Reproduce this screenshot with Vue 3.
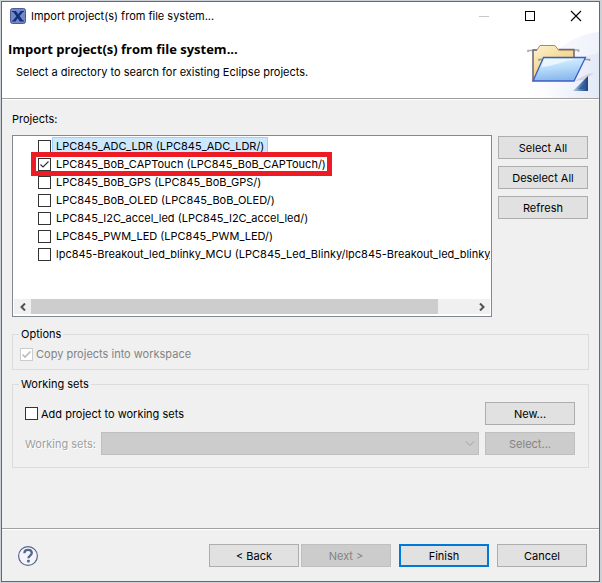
<script setup>
import { ref } from 'vue'

const projects = ref([
  { id: 'adc', label: 'LPC845_ADC_LDR (LPC845_ADC_LDR/)', checked: false, selected: true },
  { id: 'cap', label: 'LPC845_BoB_CAPTouch (LPC845_BoB_CAPTouch/)', checked: true, marked: true },
  { id: 'gps', label: 'LPC845_BoB_GPS (LPC845_BoB_GPS/)', checked: false },
  { id: 'oled', label: 'LPC845_BoB_OLED (LPC845_BoB_OLED/)', checked: false },
  { id: 'i2c', label: 'LPC845_I2C_accel_led (LPC845_I2C_accel_led/)', checked: false },
  { id: 'pwm', label: 'LPC845_PWM_LED (LPC845_PWM_LED/)', checked: false },
  { id: 'blinky', label: 'lpc845-Breakout_led_blinky_MCU (LPC845_Led_Blinky/lpc845-Breakout_led_blinky_', checked: false },
])
const copyProjects = ref(true)
const addToSets = ref(false)

function setAll(value) {
  projects.value.forEach((p) => { p.checked = value })
}
</script>

<template>
  <main class="dialog">
    <div class="titlebar">
      <svg class="app-icon" width="16" height="16" viewBox="0 0 16 16" aria-hidden="true">
        <rect x="0.5" y="0.5" width="15" height="15" rx="2" fill="#7687c3" stroke="#4a5d9c" />
        <path d="M2 3H6L8.2 6.2L10.6 3H14V4H13L9.6 8L13 12.4H14V13.4H9.8L7.8 10.2L5.4 13.4H2V12.4H3L6.4 8.2L3.2 4H2Z" fill="#10307f" />
      </svg>
      <span class="title">Import project(s) from file system...</span>
      <div class="window-buttons">
        <button class="win-btn" type="button" aria-label="Minimize">
          <svg width="12" height="12" viewBox="0 0 12 12"><path d="M1 6.5H11" stroke="#c8c8c8" /></svg>
        </button>
        <button class="win-btn" type="button" aria-label="Maximize">
          <svg width="12" height="12" viewBox="0 0 12 12"><rect x="1.5" y="1.5" width="9" height="9" fill="none" stroke="#000" /></svg>
        </button>
        <button class="win-btn" type="button" aria-label="Close">
          <svg width="12" height="12" viewBox="0 0 12 12"><path d="M1 1L11 11M11 1L1 11" stroke="#000" stroke-width="1.1" /></svg>
        </button>
      </div>
    </div>

    <header class="banner">
      <div class="banner-text">
        <h1>Import project(s) from file system...</h1>
        <p>Select a directory to search for existing Eclipse projects.</p>
      </div>
      <svg class="banner-art" width="75" height="66" viewBox="0 0 75 66" aria-hidden="true">
        <defs>
          <linearGradient id="swoosh" x1="0" y1="0" x2="1" y2="0">
            <stop offset="0" stop-color="#fff" />
            <stop offset="1" stop-color="#dfe5f7" />
          </linearGradient>
          <linearGradient id="back" x1="0" y1="0" x2="0.6" y2="1">
            <stop offset="0" stop-color="#fdf3d2" />
            <stop offset="1" stop-color="#f0c460" />
          </linearGradient>
          <linearGradient id="front" x1="0" y1="0" x2="0.2" y2="1">
            <stop offset="0" stop-color="#e4f4ff" />
            <stop offset="0.5" stop-color="#b8dcfa" />
            <stop offset="1" stop-color="#8ab9ee" />
          </linearGradient>
          <linearGradient id="corner" x1="0" y1="0" x2="1" y2="0">
            <stop offset="0" stop-color="#b9cfe6" />
            <stop offset="0.5" stop-color="#5584b8" />
            <stop offset="1" stop-color="#1d427e" />
          </linearGradient>
        </defs>
        <path d="M0 66C16 24 48 2 75 0V66Z" fill="url(#swoosh)" opacity="0.5" />
        <path d="M14 66C26 38 52 24 75 21V66Z" fill="url(#swoosh)" opacity="0.7" />
        <path d="M50 49L64 42L70 41L60 48Z" fill="#c8c0d4" opacity="0.6" />
        <path d="M4 20V18.5H9M50 18H54.5V20" fill="none" stroke="#aaa" stroke-width="1.6" />
        <path d="M9 49V18H13L16 13.5H31L34.5 18H50V46H12Z" fill="url(#back)" stroke="#b08b48" />
        <path d="M9 49V18H13M34.5 17.5H50V26" fill="none" stroke="#6b6690" stroke-width="1.3" />
        <path d="M15 29V27.5H20M61 27.5H65.5V29" fill="none" stroke="#999" stroke-width="1.5" />
        <path d="M9 49L19.5 25.5H61.5L50 49Z" fill="url(#front)" stroke="#3c5cc4" stroke-width="1.3" />
        <path d="M17 35L20.5 27H56C40 28 32 34 17 35Z" fill="#f0faff" opacity="0.8" />
        <path d="M49 59L64 44V59Z" fill="url(#corner)" />
        <path d="M54 57L61 51V57Z" fill="#2e5792" opacity="0.7" />
      </svg>
    </header>

    <div class="content">
      <h2 id="projects-label" class="section-label">Projects:</h2>
      <div class="projects">
        <div class="list-box">
          <ul class="rows" aria-labelledby="projects-label">
            <li v-for="p in projects" :key="p.id" class="row">
              <span class="tick">
                <input :id="p.id" v-model="p.checked" type="checkbox" />
                <svg v-if="p.checked" width="13" height="13" viewBox="0 0 13 13"><path d="M2.5 6.5L5 9L10.5 3.5" /></svg>
              </span>
              <label :for="p.id" class="row-label" :class="{ selected: p.selected }">{{ p.label }}</label>
              <span v-if="p.marked" class="marker"></span>
            </li>
          </ul>
          <div class="scrollbar">
            <button class="scroll-btn" type="button" aria-label="Scroll left">
              <svg width="8" height="8" viewBox="0 0 8 8"><path d="M6 0.5L2.5 4L6 7.5" /></svg>
            </button>
            <div class="track"><div class="thumb"></div></div>
            <button class="scroll-btn" type="button" aria-label="Scroll right">
              <svg width="8" height="8" viewBox="0 0 8 8"><path d="M2 0.5L5.5 4L2 7.5" /></svg>
            </button>
          </div>
        </div>
        <div class="side">
          <button class="btn" type="button" @click="setAll(true)">Select All</button>
          <button class="btn" type="button" @click="setAll(false)">Deselect All</button>
          <button class="btn" type="button">Refresh</button>
        </div>
      </div>

      <fieldset class="group options">
        <legend>Options</legend>
        <div class="check-line muted">
          <span class="tick">
            <input id="copy" v-model="copyProjects" type="checkbox" disabled />
            <svg v-if="copyProjects" width="13" height="13" viewBox="0 0 13 13"><path d="M2.5 6.5L5 9L10.5 3.5" /></svg>
          </span>
          <label for="copy">Copy projects into workspace</label>
        </div>
      </fieldset>

      <fieldset class="group sets">
        <legend>Working sets</legend>
        <div class="set-line">
          <div class="check-line">
            <span class="tick"><input id="add" v-model="addToSets" type="checkbox" /></span>
            <label for="add">Add project to working sets</label>
          </div>
          <button class="btn" type="button">New...</button>
        </div>
        <div class="set-line">
          <label for="sets" class="set-label">Working sets:</label>
          <div class="combo">
            <select id="sets" disabled></select>
            <svg width="10" height="6" viewBox="0 0 10 6"><path d="M1 0.5L5 4.5L9 0.5" /></svg>
          </div>
          <button class="btn" type="button" disabled>Select...</button>
        </div>
      </fieldset>
    </div>

    <footer class="footer">
      <button class="help" type="button" aria-label="Help">
        <svg width="22" height="22" viewBox="0 0 22 22">
          <circle cx="11" cy="11" r="9.4" fill="#f4f5f9" stroke="#56678f" stroke-width="1.2" />
          <path d="M7.4 8.2C7.4 5.8 9 4.9 11.1 4.9C13.3 4.9 14.8 6.1 14.8 8C14.8 10.6 11.4 10.6 11.4 13.2" fill="none" stroke="#56678f" stroke-width="2.3" />
          <rect x="10" y="14.8" width="2.8" height="2.6" rx="1" fill="#56678f" />
        </svg>
      </button>
      <div class="nav">
        <button class="btn" type="button">&lt; Back</button>
        <button class="btn" type="button" disabled>Next &gt;</button>
      </div>
      <button class="btn primary" type="button">Finish</button>
      <button class="btn" type="button">Cancel</button>
    </footer>
  </main>
</template>

<style>
body {
  margin: 0;
  background: #cdd1d8;
}
#app {
  display: flex;
  min-height: 100vh;
}
</style>

<style scoped>
* {
  box-sizing: border-box;
}
.dialog {
  flex: 1;
  min-width: 0;
  display: flex;
  flex-direction: column;
  margin: 1px 2px 1px 1px;
  border: 1px solid #1e7bc8;
  background: #f0f0f0;
  color: #000;
  font: 11px/16px Inter, "Open Sans", sans-serif;
}
button,
select {
  font: inherit;
  color: inherit;
}
svg {
  display: block;
}

.titlebar {
  display: flex;
  align-items: center;
  height: 28px;
  padding: 0 0 0 8px;
  gap: 5px;
  background: #fff;
}
.title {
  flex: 1;
}
.window-buttons {
  display: flex;
}
.win-btn {
  display: grid;
  place-items: center;
  width: 46px;
  height: 28px;
  padding: 0;
  border: 0;
  background: none;
}

.banner {
  display: flex;
  align-items: flex-end;
  justify-content: space-between;
  height: 69px;
  background: #fff;
  border-bottom: 1px solid #a0a0a0;
}
.banner-text {
  align-self: flex-start;
  padding: 10px 0 0 6px;
}
.banner h1 {
  margin: 0;
  font-family: "Open Sans", sans-serif;
  font-size: 13px;
  line-height: 18px;
  font-weight: 700;
}
.banner p {
  margin: 6px 0 0 8px;
}

.content {
  flex: 1;
  display: flex;
  flex-direction: column;
  padding: 11px 10px 60px;
  border-top: 1px solid #fff;
}
.section-label {
  margin: 0 0 8px;
  font: inherit;
}
.projects {
  display: flex;
  flex: 1;
  gap: 6px;
}
.list-box {
  flex: 1;
  min-width: 0;
  display: flex;
  flex-direction: column;
  border: 1px solid #828790;
  padding: 1px 1px 2px;
  background: #fff;
}
.rows {
  flex: 1;
  margin: 0;
  padding: 0 0 0 24px;
  list-style: none;
  overflow: hidden;
}
.row {
  position: relative;
  display: flex;
  align-items: center;
  gap: 1px;
  height: 18px;
}
.row-label {
  height: 18px;
  padding: 0 3px;
  border: 1px solid transparent;
  white-space: nowrap;
}
.row-label.selected {
  background: #cce8ff;
  border-color: #99d1ff;
}
.marker {
  position: absolute;
  top: -3px;
  left: -7px;
  width: 301px;
  height: 24px;
  border: 5px solid #ed1c24;
  pointer-events: none;
}

.tick {
  flex: none;
  display: grid;
  width: 13px;
  height: 13px;
}
.tick > * {
  grid-area: 1 / 1;
}
.tick input {
  appearance: none;
  width: 13px;
  height: 13px;
  margin: 0;
  border: 1px solid #333;
  background: #fff;
}
.tick svg {
  position: relative;
  fill: none;
  stroke: #333;
  stroke-width: 1.2;
  pointer-events: none;
}
.muted {
  color: #838383;
}
.muted .tick input {
  border-color: #ccc;
}
.muted .tick svg {
  stroke: #bbb;
  stroke-width: 1.6;
}

.scrollbar {
  display: flex;
  height: 15px;
  background: #f0f0f0;
}
.scroll-btn {
  display: grid;
  place-items: center;
  width: 17px;
  padding: 0;
  border: 0;
  background: none;
}
.scroll-btn path {
  fill: none;
  stroke: #505050;
  stroke-width: 2;
}
.track {
  flex: 1;
}
.thumb {
  width: 92%;
  height: 100%;
  background: #cdcdcd;
}

.side {
  display: flex;
  flex-direction: column;
  gap: 7px;
  padding: 1px 1px 0 0;
}
.btn {
  flex: none;
  width: 90px;
  height: 23px;
  padding: 0;
  border: 1px solid #adadad;
  background: #e1e1e1;
  text-align: center;
}
.btn:disabled {
  border-color: #bfbfbf;
  background: #ccc;
  color: #838383;
}
.btn.primary {
  border: 2px solid #0078d7;
}

.group {
  min-width: 0;
  margin: 0;
  border: 1px solid #dcdcdc;
}
.group legend {
  padding: 0 2px;
}
.options {
  margin-top: 9px;
  padding: 4px 7px 7px;
}
.options legend {
  margin-left: -1px;
}
.sets {
  margin-top: 6px;
  padding: 10px 13px 12px 12px;
}
.sets legend {
  margin-left: -6px;
}
.check-line {
  flex: 1;
  display: flex;
  align-items: center;
  gap: 3px;
}
.set-line {
  display: flex;
  align-items: center;
  gap: 6px;
}
.set-line + .set-line {
  margin-top: 7px;
}
.set-label {
  width: 70px;
  white-space: nowrap;
  color: #a0a0a0;
  text-shadow: 1px 1px 0 #fff;
}
.combo {
  flex: 1;
  display: grid;
  align-items: center;
  justify-items: end;
}
.combo > * {
  grid-area: 1 / 1;
}
.combo select {
  appearance: none;
  width: 100%;
  height: 23px;
  border: 1px solid #bfbfbf;
  border-radius: 0;
  background: #ccc;
  opacity: 1;
}
.combo svg {
  position: relative;
  margin-right: 4px;
  fill: none;
  stroke: #a0a0a0;
  pointer-events: none;
}

.footer {
  display: flex;
  align-items: center;
  gap: 8px;
  padding: 15px 12px 14px 15px;
  border-top: 1px solid #a0a0a0;
  box-shadow: inset 0 1px 0 #fff;
}
.help {
  margin-right: auto;
  padding: 0;
  border: 0;
  background: none;
}
.nav {
  display: flex;
  gap: 2px;
}
</style>
